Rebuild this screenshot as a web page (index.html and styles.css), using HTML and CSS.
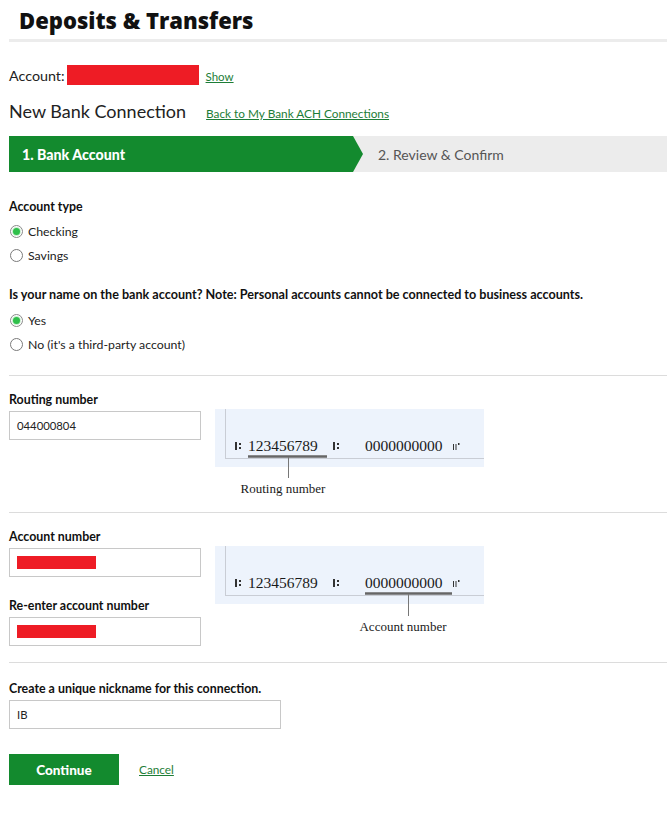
FILE: index.html
```html
<!DOCTYPE html>
<html lang="en">
<head>
<meta charset="utf-8">
<title>Deposits &amp; Transfers</title>
<link rel="stylesheet" href="styles.css">
</head>
<body>
<div class="page">
  <h1 class="title">Deposits &amp; Transfers</h1>

  <div class="acct-row">
    <span class="acct-label">Account:</span>
    <span class="redact redact-acct"></span>
    <a class="link" href="#">Show</a>
  </div>

  <div class="conn-row">
    <h2 class="conn-title">New Bank Connection</h2>
    <a class="link link-back" href="#">Back to My Bank ACH Connections</a>
  </div>

  <div class="steps">
    <div class="step step-active">1. Bank Account</div>
    <div class="step step-next">2. Review &amp; Confirm</div>
  </div>

  <div class="group group-type">
    <div class="q-label">Account type</div>
    <div class="radio-row"><span class="radio radio-on"><span class="dot"></span></span><span class="r-text">Checking</span></div>
    <div class="radio-row"><span class="radio"></span><span class="r-text">Savings</span></div>
  </div>

  <div class="group group-name">
    <div class="q-label q-long">Is your name on the bank account? Note: Personal accounts cannot be connected to business accounts.</div>
    <div class="radio-row"><span class="radio radio-on"><span class="dot"></span></span><span class="r-text">Yes</span></div>
    <div class="radio-row"><span class="radio"></span><span class="r-text">No (it's a third-party account)</span></div>
  </div>

  <div class="section section-routing">
    <div class="fields">
      <div class="f-label">Routing number</div>
      <div class="input"><span class="in-text">044000804</span></div>
    </div>
    <svg class="check" width="269" height="90" viewBox="0 0 269 90">
      <rect x="0" y="0" width="269" height="58" fill="#edf3fc"/>
      <line x1="10.5" y1="0" x2="10.5" y2="49.5" stroke="#c9cdd5" stroke-width="1"/>
      <line x1="10" y1="49.5" x2="269" y2="49.5" stroke="#c9cdd5" stroke-width="1"/>
      <rect x="20" y="33" width="2" height="8" fill="#333"/>
      <rect x="24" y="34" width="2" height="2" fill="#333"/>
      <rect x="24" y="38" width="2" height="2" fill="#333"/>
      <text x="33" y="42" class="micr">123456789</text>
      <rect x="118" y="33" width="2" height="8" fill="#333"/>
      <rect x="122" y="34" width="2" height="2" fill="#333"/>
      <rect x="122" y="38" width="2" height="2" fill="#333"/>
      <text x="150" y="42" class="micr">0000000000</text>
      <rect x="238" y="35" width="1" height="6" fill="#333"/>
      <rect x="240.5" y="35" width="1" height="6" fill="#333"/>
      <rect x="243" y="34" width="1.5" height="2" fill="#333"/>
      <line x1="33" y1="47.5" x2="112" y2="47.5" stroke="#666" stroke-width="2.5"/>
      <line x1="73.5" y1="48" x2="73.5" y2="69" stroke="#777" stroke-width="1"/>
      <text x="68" y="84" class="cap" text-anchor="middle">Routing number</text>
    </svg>
  </div>

  <div class="section section-account">
    <div class="fields">
      <div class="f-label">Account number</div>
      <div class="input"><span class="redact redact-in"></span></div>
      <div class="f-label f-label-2">Re-enter account number</div>
      <div class="input"><span class="redact redact-in"></span></div>
    </div>
    <svg class="check" width="269" height="90" viewBox="0 0 269 90">
      <rect x="0" y="0" width="269" height="58" fill="#edf3fc"/>
      <line x1="10.5" y1="0" x2="10.5" y2="49.5" stroke="#c9cdd5" stroke-width="1"/>
      <line x1="10" y1="49.5" x2="269" y2="49.5" stroke="#c9cdd5" stroke-width="1"/>
      <rect x="20" y="33" width="2" height="8" fill="#333"/>
      <rect x="24" y="34" width="2" height="2" fill="#333"/>
      <rect x="24" y="38" width="2" height="2" fill="#333"/>
      <text x="33" y="42" class="micr">123456789</text>
      <rect x="118" y="33" width="2" height="8" fill="#333"/>
      <rect x="122" y="34" width="2" height="2" fill="#333"/>
      <rect x="122" y="38" width="2" height="2" fill="#333"/>
      <text x="150" y="42" class="micr">0000000000</text>
      <rect x="238" y="35" width="1" height="6" fill="#333"/>
      <rect x="240.5" y="35" width="1" height="6" fill="#333"/>
      <rect x="243" y="34" width="1.5" height="2" fill="#333"/>
      <line x1="150" y1="47.5" x2="237" y2="47.5" stroke="#666" stroke-width="2.5"/>
      <line x1="193.5" y1="48" x2="193.5" y2="70" stroke="#777" stroke-width="1"/>
      <text x="188" y="85" class="cap" text-anchor="middle">Account number</text>
    </svg>
  </div>

  <div class="section-nick">
    <div class="f-label">Create a unique nickname for this connection.</div>
    <div class="input input-wide"><span class="in-text">IB</span></div>
    <div class="actions">
      <button class="btn" type="button">Continue</button>
      <a class="link link-cancel" href="#">Cancel</a>
    </div>
  </div>
</div>
</body>
</html>
```

FILE: styles.css
```css
* { box-sizing: border-box; }
html, body { margin: 0; padding: 0; background: #fff; }
body {
  font-family: Lato, "Open Sans", "Liberation Sans", sans-serif;
  color: #1a1a1a;
}
.page { padding-left: 9px; width: 667px; }

.title {
  margin: 0;
  padding: 7px 0 6px 10px;
  font-family: "Open Sans", Lato, sans-serif;
  font-size: 22px;
  line-height: 26px;
  font-weight: 800;
  color: #111;
  border-bottom: 3px solid #ececec;
}

.acct-row {
  display: flex;
  align-items: center;
  margin-top: 23px;
  height: 20px;
}
.acct-label { font-size: 14.3px; color: #222; }
.redact { display: inline-block; background: #ee1c25; }
.redact-acct { width: 132px; height: 20px; margin-left: 2px; }

.link {
  color: #1d7d37;
  text-decoration: underline;
  font-size: 11.5px;
}
.acct-row .link { margin-left: 7px; margin-top: 2px; }

.conn-row {
  display: flex;
  align-items: baseline;
  margin-top: 15px;
}
.conn-title {
  margin: 0;
  font-size: 18px;
  line-height: 22px;
  font-weight: 400;
  color: #222;
}
.link-back { margin-left: 20px; font-size: 11.8px; }

.steps {
  display: flex;
  margin-top: 14px;
  height: 36px;
  background: #ececec;
}
.step {
  display: flex;
  align-items: center;
}
.step-active {
  width: 354px;
  padding-left: 13px;
  background: #138a2e;
  color: #fff;
  font-weight: 900;
  font-size: 14.2px;
  clip-path: polygon(0 0, calc(100% - 10px) 0, 100% 50%, calc(100% - 10px) 100%, 0 100%);
}
.step-next {
  padding-left: 15px;
  color: #555;
  font-size: 14px;
}

.q-label, .f-label {
  font-size: 12.4px;
  line-height: 16px;
  font-weight: 700;
  color: #111;
}
.q-long { font-size: 12.6px; }
.group-type { margin-top: 27px; }
.group-type .q-label { margin-bottom: 4px; }
.group-name { margin-top: 20px; }
.group-name .q-label { margin-bottom: 5px; }

.radio-row {
  display: flex;
  align-items: center;
  height: 24px;
}
.radio {
  width: 13px;
  height: 13px;
  border: 1px solid #7a7a7a;
  border-radius: 50%;
  display: flex;
  align-items: center;
  justify-content: center;
  margin-left: 0.5px;
}
.radio-on { border-color: #8a8a8a; }
.dot {
  width: 7px;
  height: 7px;
  border-radius: 50%;
  background: #2fbf4a;
  box-shadow: 0 0 0 1px #c8efd0;
}
.r-text { margin-left: 5.5px; font-size: 12.3px; color: #222; }

.section {
  display: flex;
  align-items: flex-start;
  border-top: 1px solid #dcdcdc;
  margin-top: 19px;
}
.section-routing { padding: 16px 0 13px; }
.section-account { margin-top: 0; padding: 16px 0 16px; }
.fields { width: 192px; }
.check { margin-left: 14px; margin-top: 17px; display: block; }
.micr { font-family: "Liberation Serif", "DejaVu Serif", serif; font-size: 15.5px; fill: #1a1a1a; }
.cap { font-family: "Liberation Serif", "DejaVu Serif", serif; font-size: 13px; fill: #1a1a1a; }

.input {
  margin-top: 3px;
  height: 29px;
  border: 1px solid #c8c8c8;
  display: flex;
  align-items: center;
  padding-left: 7px;
  background: #fff;
}
.in-text { font-size: 11.3px; color: #222; }
.redact-in { width: 79px; height: 13px; margin-top: -1px; }
.f-label-2 { margin-top: 21px; }
.input-wide { width: 272px; }

.section-nick {
  border-top: 1px solid #dcdcdc;
  padding-top: 18px;
}
.actions {
  display: flex;
  align-items: center;
  margin-top: 25px;
}
.btn {
  width: 110px;
  height: 31px;
  border: 0;
  background: #138a2e;
  color: #fff;
  font-family: Lato, "Open Sans", sans-serif;
  font-size: 13.5px;
  font-weight: 900;
  padding: 0;
}
.link-cancel { margin-left: 20px; font-size: 11.8px; margin-top: -1px; }
```
